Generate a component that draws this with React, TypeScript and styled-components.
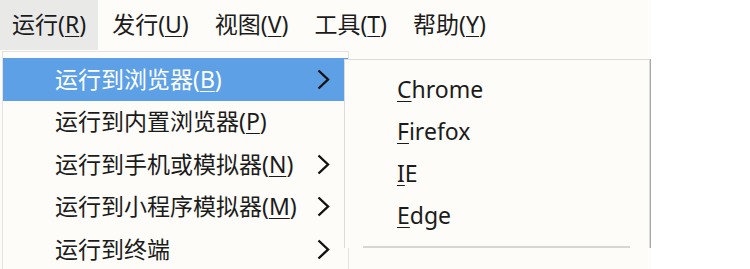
import * as React from 'react';
import styled, { createGlobalStyle } from 'styled-components';

const GlobalStyle = createGlobalStyle`
  html, body {
    margin: 0;
    padding: 0;
    background: #ffffff;
  }
  body {
    font-family: "Noto Sans", "Noto Sans CJK SC", sans-serif;
  }
`;

const Window = styled.div`
  position: relative;
  width: 651px;
  height: 269px;
  overflow: hidden;
  background-color: #fdfcf8;
  color: #1b1b1b;
  font-family: "Noto Sans", "Noto Sans CJK SC", sans-serif;
  font-size: 23px;
  line-height: 1;
`;

const MenuBar = styled.div`
  display: flex;
  gap: 2px;
  height: 50px;
  align-items: stretch;
`;

const BarItem = styled.div<{ $active?: boolean }>`
  display: flex;
  align-items: center;
  padding: 0 12px 2px 12px;
  background-color: ${(p) => (p.$active ? '#e9e9e8' : 'transparent')};
  white-space: nowrap;
`;

const Key = styled.span`
  text-decoration: underline;
  text-decoration-thickness: 1px;
  text-underline-offset: 3px;
`;

const Menu = styled.div`
  position: absolute;
  left: 2px;
  top: 51px;
  width: 345px;
  padding-top: 6px;
  background-color: #fdfcf8;
  border: 1px solid #e2e2e0;
  border-bottom: none;
  z-index: 2;
`;

const Item = styled.div<{ $active?: boolean; $h?: number }>`
  display: flex;
  align-items: center;
  height: ${(p) => p.$h ?? 42.5}px;
  padding: 0 18px 0 52px;
  background-color: ${(p) => (p.$active ? '#5da0e6' : 'transparent')};
  color: ${(p) => (p.$active ? '#ffffff' : '#1b1b1b')};
  white-space: nowrap;
`;

const Label = styled.span`
  flex: 1;
`;

const Chevron = styled.svg`
  width: 13px;
  height: 21px;
  flex: none;
`;

const SubMenu = styled.div`
  position: absolute;
  left: 344px;
  top: 59px;
  width: 304px;
  padding-top: 8px;
  background-color: #fdfcf8;
  border: 1px solid #dcdcda;
  border-bottom: none;
  box-shadow: 2px 0 0 #a9a9a6;
  z-index: 3;
`;

const Separator = styled.div`
  height: 2px;
  margin: 10px 19px 0 18px;
  background-color: #d6d6d4;
`;

const Arrow = () => (
  <Chevron viewBox="0 0 13 21">
    <polyline
      points="1.5,1.5 11,10.5 1.5,19.5"
      fill="none"
      stroke="#111"
      strokeWidth="2.4"
    />
  </Chevron>
);

const bar = [
  { name: '运行', key: 'R' },
  { name: '发行', key: 'U' },
  { name: '视图', key: 'V' },
  { name: '工具', key: 'T' },
  { name: '帮助', key: 'Y' },
];

const runItems = [
  { name: '运行到浏览器', key: 'B', sub: true },
  { name: '运行到内置浏览器', key: 'P', sub: false },
  { name: '运行到手机或模拟器', key: 'N', sub: true },
  { name: '运行到小程序模拟器', key: 'M', sub: true },
  { name: '运行到终端', key: '', sub: true },
];

const browsers = ['Chrome', 'Firefox', 'IE', 'Edge'];

export default function App() {
  return (
    <>
      <GlobalStyle />
      <Window>
        <MenuBar>
          {bar.map((b, i) => (
            <BarItem key={b.key} $active={i === 0}>
              {b.name}(<Key>{b.key}</Key>)
            </BarItem>
          ))}
        </MenuBar>

        <Menu>
          {runItems.map((it, i) => (
            <Item key={it.name} $active={i === 0}>
              <Label>
                {it.name}
                {it.key && (
                  <>
                    (<Key>{it.key}</Key>)
                  </>
                )}
              </Label>
              {it.sub && <Arrow />}
            </Item>
          ))}
        </Menu>

        <SubMenu>
          {browsers.map((b) => (
            <Item key={b} $h={42}>
              <Label>
                <Key>{b[0]}</Key>
                {b.slice(1)}
              </Label>
            </Item>
          ))}
          <Separator />
        </SubMenu>
      </Window>
    </>
  );
}
